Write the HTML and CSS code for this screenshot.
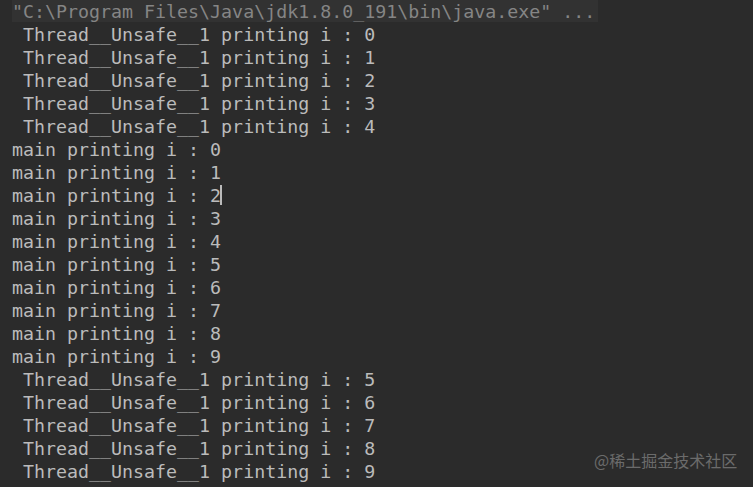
FILE: index.html
```html
<!DOCTYPE html>
<html>
<head>
<meta charset="utf-8">
<link rel="stylesheet" href="styles.css">
</head>
<body>
<div class="console">
<div class="line"><span class="cmd">"C:\Program Files\Java\jdk1.8.0_191\bin\java.exe" ...</span></div>
<div class="line"> Thread__Unsafe__1 printing i : 0</div>
<div class="line"> Thread__Unsafe__1 printing i : 1</div>
<div class="line"> Thread__Unsafe__1 printing i : 2</div>
<div class="line"> Thread__Unsafe__1 printing i : 3</div>
<div class="line"> Thread__Unsafe__1 printing i : 4</div>
<div class="line">main printing i : 0</div>
<div class="line">main printing i : 1</div>
<div class="line">main printing i : 2<span class="caret"></span></div>
<div class="line">main printing i : 3</div>
<div class="line">main printing i : 4</div>
<div class="line">main printing i : 5</div>
<div class="line">main printing i : 6</div>
<div class="line">main printing i : 7</div>
<div class="line">main printing i : 8</div>
<div class="line">main printing i : 9</div>
<div class="line"> Thread__Unsafe__1 printing i : 5</div>
<div class="line"> Thread__Unsafe__1 printing i : 6</div>
<div class="line"> Thread__Unsafe__1 printing i : 7</div>
<div class="line"> Thread__Unsafe__1 printing i : 8</div>
<div class="line"> Thread__Unsafe__1 printing i : 9</div>
</div>
<div class="watermark">@稀土掘金技术社区</div>
</body>
</html>
```
FILE: styles.css
```css
html, body {
  margin: 0;
  padding: 0;
  background: #2b2b2b;
  width: 753px;
  height: 487px;
  overflow: hidden;
}
body {
  position: relative;
}
.console {
  padding-left: 12px;
  font-family: "DejaVu Sans Mono", monospace;
  font-size: 18.3px;
  line-height: 23px;
  color: #bbbbbb;
}
.line {
  white-space: pre;
  height: 23px;
}
.cmd {
  display: inline-block;
  background: #323232;
  color: #858585;
  padding-right: 3px;
  height: 22px;
}
.caret {
  display: inline-block;
  width: 2px;
  height: 20px;
  background: #bbbbbb;
  vertical-align: -3px;
  margin-left: -1px;
}
.watermark {
  position: absolute;
  left: 594px;
  top: 449px;
  font-family: "Noto Sans CJK SC", sans-serif;
  font-size: 16px;
  line-height: 22px;
  color: #6b6b6b;
}
```
